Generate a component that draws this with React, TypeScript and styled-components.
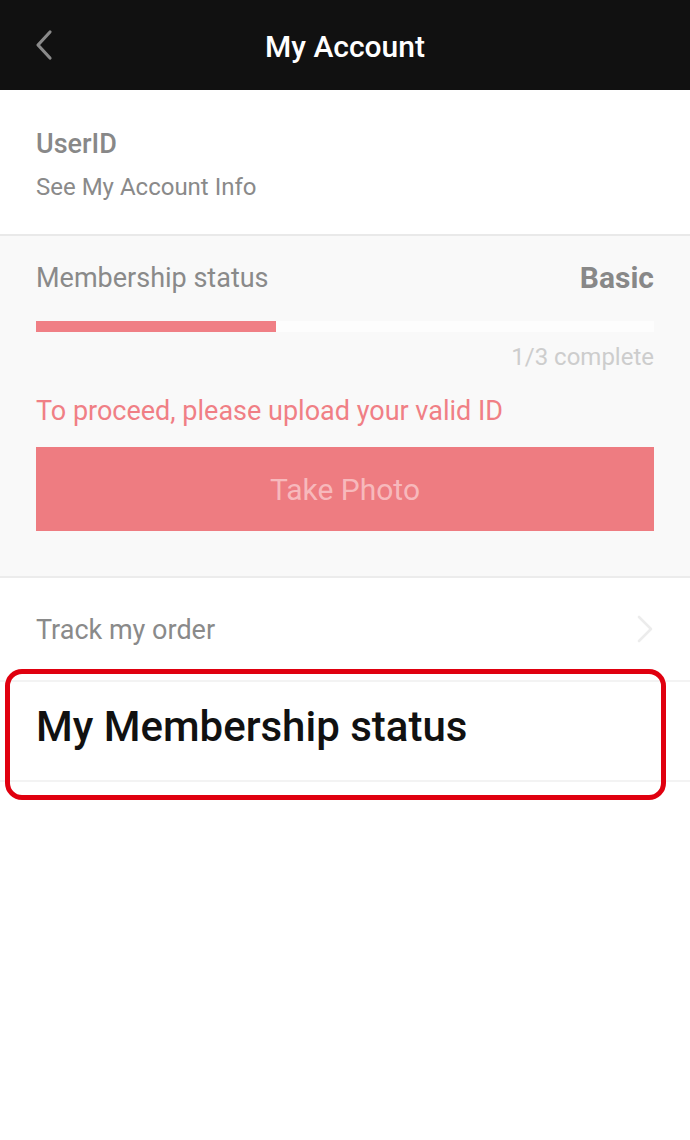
import React from "react";
import styled, { createGlobalStyle } from "styled-components";

const Global = createGlobalStyle`
  html, body { margin: 0; padding: 0; background: #ffffff; }
  body { font-family: Roboto, "Noto Sans", "Liberation Sans", sans-serif; -webkit-font-smoothing: antialiased; }
  * { box-sizing: border-box; }
`;

const Page = styled.div`
  width: 690px;
  min-height: 1140px;
  background: #ffffff;
`;

const Header = styled.header`
  height: 90px;
  background: #111111;
  display: grid;
  grid-template-columns: 90px 1fr 90px;
  align-items: center;
`;

const BackButton = styled.button`
  border: 0;
  background: transparent;
  padding: 0 0 0 34px;
  height: 90px;
  display: flex;
  align-items: center;
  cursor: pointer;
`;

const Title = styled.h1`
  margin: 3px 0 0;
  text-align: center;
  color: #ffffff;
  font-size: 30px;
  font-weight: 500;
  line-height: 38px;
`;

const UserSection = styled.section`
  padding: 37px 36px 32px;
  border-bottom: 2px solid #e9e9e9;
  display: flex;
  flex-direction: column;
  gap: 11px;
`;

const UserName = styled.div`
  color: #888888;
  font-size: 27px;
  font-weight: 500;
  line-height: 34px;
`;

const SubText = styled.div`
  color: #8a8a8a;
  font-size: 24px;
  line-height: 30px;
`;

const MemberSection = styled.section`
  background: #f9f9f9;
  padding: 23px 36px 45px;
  border-bottom: 2px solid #ececec;
  display: flex;
  flex-direction: column;
`;

const StatusRow = styled.div`
  display: flex;
  justify-content: space-between;
  align-items: center;
  height: 38px;
`;

const StatusLabel = styled.span`
  color: #8a8a8a;
  font-size: 27px;
  line-height: 34px;
`;

const StatusValue = styled.span`
  color: #888888;
  font-size: 30px;
  font-weight: 700;
  line-height: 38px;
`;

const Track = styled.div`
  margin-top: 24px;
  height: 11px;
  background: #fdfdfd;
  display: flex;
`;

const Fill = styled.div`
  height: 100%;
  background: #f07f85;
`;

const Progress = styled.div`
  margin-top: 10px;
  text-align: right;
  color: #cdcdcd;
  font-size: 24px;
  line-height: 30px;
`;

const Notice = styled.div`
  margin-top: 22px;
  color: #f07f85;
  font-size: 27px;
  line-height: 34px;
`;

const PhotoButton = styled.button`
  margin-top: 19px;
  height: 84px;
  width: 100%;
  border: 0;
  background: #ee7c81;
  color: #f7b9bc;
  font-family: inherit;
  font-size: 30px;
  font-weight: 400;
  cursor: pointer;
`;

const List = styled.div`
  display: flex;
  flex-direction: column;
`;

const Row = styled.div<{ $big?: boolean }>`
  position: relative;
  height: ${(p) => (p.$big ? "100px" : "104px")};
  padding: 0 36px;
  border-bottom: 2px solid #f3f3f3;
  display: flex;
  align-items: center;
  justify-content: space-between;
`;

const RowLabel = styled.span<{ $big?: boolean }>`
  color: ${(p) => (p.$big ? "#111111" : "#8a8a8a")};
  font-size: ${(p) => (p.$big ? "42px" : "27px")};
  font-weight: ${(p) => (p.$big ? 500 : 400)};
  line-height: ${(p) => (p.$big ? "50px" : "34px")};
  margin-top: ${(p) => (p.$big ? "-8px" : "2px")};
`;

const Highlight = styled.div`
  position: absolute;
  left: 5px;
  right: 24px;
  top: -13px;
  bottom: -20px;
  border: 5px solid #e0000f;
  border-radius: 17px;
  pointer-events: none;
`;

export default function App() {
  return (
    <Page>
      <Global />
      <Header>
        <BackButton aria-label="Back">
          <svg width="20" height="32" viewBox="0 0 20 32">
            <path d="M16 3 L4 16 L16 29" fill="none" stroke="#8a8a8a" strokeWidth="3.2" strokeLinecap="round" strokeLinejoin="round" />
          </svg>
        </BackButton>
        <Title>My Account</Title>
        <div />
      </Header>

      <UserSection>
        <UserName>UserID</UserName>
        <SubText>See My Account Info</SubText>
      </UserSection>

      <MemberSection>
        <StatusRow>
          <StatusLabel>Membership status</StatusLabel>
          <StatusValue>Basic</StatusValue>
        </StatusRow>
        <Track>
          <Fill style={{ width: `${(240 / 618) * 100}%` }} />
        </Track>
        <Progress>1/3 complete</Progress>
        <Notice>To proceed, please upload your valid ID</Notice>
        <PhotoButton>Take Photo</PhotoButton>
      </MemberSection>

      <List>
        <Row>
          <RowLabel>Track my order</RowLabel>
          <svg width="18" height="28" viewBox="0 0 18 28">
            <path d="M3 2 L15 14 L3 26" fill="none" stroke="#ececec" strokeWidth="2.6" strokeLinecap="round" strokeLinejoin="round" />
          </svg>
        </Row>
        <Row $big>
          <RowLabel $big>My Membership status</RowLabel>
          <Highlight />
        </Row>
      </List>
    </Page>
  );
}
